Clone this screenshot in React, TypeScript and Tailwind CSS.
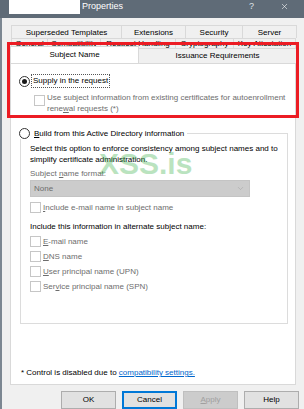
import React from 'react';
import { X, ChevronDown } from 'lucide-react';

const Check: React.FC<{ label: React.ReactNode; dim?: boolean }> = ({ label, dim = true }) => (
  <div className="flex items-center h-[11px] leading-[11px]">
    <span className="w-[11px] h-[11px] border border-[#c6c6c6] bg-white shrink-0" />
    <span className={`ml-[2px] ${dim ? 'text-[#6d6d6d]' : 'text-black'}`}>{label}</span>
  </div>
);

const Radio: React.FC<{ checked?: boolean }> = ({ checked }) => (
  <span className="w-[11px] h-[11px] rounded-full border border-[#333333] bg-white flex items-center justify-center shrink-0">
    {checked && <span className="w-[5px] h-[5px] rounded-full bg-[#1a1a1a]" />}
  </span>
);

const App: React.FC = () => {
  const row1 = [
    { label: 'Superseded Templates', w: 'w-[111px]' },
    { label: 'Extensions', w: 'w-[65px]' },
    { label: 'Security', w: 'w-[58px]' },
    { label: 'Server', w: 'w-[55px]' },
  ];
  const row2 = [
    { label: 'General', w: 'w-[37px]' },
    { label: 'Compatibility', w: 'w-[54px]' },
    { label: 'Request Handling', w: 'w-[76px]' },
    { label: 'Cryptography', w: 'w-[59px]' },
    { label: 'Key Attestation', w: 'w-[63px]' },
  ];

  return (
    <div className="relative w-[304px] h-[409px] overflow-hidden bg-[#f0f0f0] text-[8px] text-black font-['Liberation_Sans',Arial,sans-serif]">
      {/* title bar */}
      <div className="flex items-start h-[18px] bg-[#5f6b77] text-white">
        <div className="ml-[9px] w-[71px] h-[14px] bg-white" />
        <span className="ml-[2px] mt-[1px] text-[9px] leading-[11px]">Properties</span>
        <span className="ml-auto mt-[1px] text-[9px] leading-[11px] text-[#dfe3e7]">?</span>
        <X className="ml-[26px] mr-[15px] mt-[2px] w-[9px] h-[9px] text-white" strokeWidth={1.5} />
      </div>

      <div className="flex h-[391px]">
        <div className="w-[2px] bg-[#7c8792] shrink-0" />
        <div className="flex-1 flex flex-col pl-[8px]">
          {/* tab rows */}
          <div className="flex mt-[7px] ml-[1px] h-[13px]">
            {row1.map((t) => (
              <div key={t.label} className={`${t.w} border border-[#d9d9d9] border-b-0 -ml-px first:ml-0 flex items-center justify-center leading-[13px]`}>
                {t.label}
              </div>
            ))}
          </div>
          <div className="flex ml-[1px] h-[10px]">
            {row2.map((t) => (
              <div key={t.label} className={`${t.w} border border-[#d9d9d9] border-b-0 -ml-px first:ml-0 flex items-center justify-center leading-[10px] overflow-hidden`}>
                {t.label}
              </div>
            ))}
          </div>
          <div className="flex items-end h-[15px]">
            <div className="w-[129px] h-[17px] -mt-[2px] bg-white border border-[#d9d9d9] border-b-0 flex items-center justify-center relative z-10">
              Subject Name
            </div>
            <div className="w-[158px] h-[15px] border border-[#d9d9d9] border-b-0 border-l-0 flex items-center justify-center">
              Issuance Requirements
            </div>
          </div>

          {/* panel */}
          <div className="w-[286px] h-[322px] bg-white border border-[#d9d9d9] flex flex-col pl-[8px] pr-[8px]">
            <div className="flex items-center mt-[10px] h-[14px]">
              <Radio checked />
              <span className="ml-[1px] px-[1px] border border-dotted border-[#555555] leading-[12px]">
                Supply in the request
              </span>
            </div>
            <div className="flex mt-[5px] ml-[15px]">
              <span className="mt-[2px] w-[11px] h-[11px] border border-[#c6c6c6] bg-white shrink-0" />
              <div className="ml-[2px] text-[#6d6d6d] leading-[10.5px]">
                Use subject information from existing certificates for autoenrollment
                <br />
                rene<u>w</u>al requests (*)
              </div>
            </div>

            <div className="flex items-center mt-[14px] h-[11px] w-fit pr-[3px] bg-white relative z-10">
              <Radio />
              <span className="ml-[4px] leading-[11px]">
                <u>B</u>uild from this Active Directory information
              </span>
            </div>
            <div className="-mt-[6px] ml-[1px] w-[268px] h-[191px] border border-[#dcdcdc] flex flex-col pl-[9px] pt-[9px]">
              <div className="leading-[11px]">
                Select this option to enforce consistency among subject names and to
                <br />
                simplify certificate administration.
              </div>
              <div className="mt-[3px] leading-[11px] text-[#6d6d6d]">
                Subject <u>n</u>ame format:
              </div>
              <div className="mt-[1px] w-[220px] h-[17px] bg-[#cccccc] border border-[#c4c4c4] flex items-center pl-[3px] pr-[4px] text-[#6d6d6d]">
                None
                <ChevronDown className="ml-auto w-[9px] h-[9px] text-[#9a9a9a]" strokeWidth={1.2} />
              </div>
              <div className="mt-[5px]">
                <Check label={<><u>I</u>nclude e-mail name in subject name</>} />
              </div>
              <div className="mt-[8px] leading-[11px]">Include this information in alternate subject name:</div>
              <div className="mt-[4px] flex flex-col gap-[4px]">
                <Check label={<><u>E</u>-mail name</>} />
                <Check label={<><u>D</u>NS name</>} />
                <Check label={<><u>U</u>ser principal name (UPN)</>} />
                <Check label={<>Ser<u>v</u>ice principal name (SPN)</>} />
              </div>
            </div>

            <div className="mt-auto mb-[6px] ml-[2px] leading-[11px]">
              * Control is disabled due to{' '}
              <span className="text-[#0066cc] underline">compatibility settings.</span>
            </div>
          </div>

          {/* buttons */}
          <div className="flex justify-end gap-[6px] mt-[6px] pr-[5px]">
            <button className="w-[55px] h-[18px] bg-[#e1e1e1] border border-[#adadad] leading-[16px]">OK</button>
            <button className="w-[55px] h-[18px] bg-[#e1e1e1] border-2 border-[#0078d7] leading-[14px]">Cancel</button>
            <button className="w-[55px] h-[18px] bg-[#cccccc] border border-[#bfbfbf] text-[#a0a0a0] leading-[16px]">
              <u>A</u>pply
            </button>
            <button className="w-[55px] h-[18px] bg-[#e1e1e1] border border-[#adadad] leading-[16px]">Help</button>
          </div>
        </div>
      </div>

      {/* red annotation frame */}
      <div className="absolute left-[7px] top-[42px] w-[292px] h-[76px] border-[3px] border-[#ec1c24] pointer-events-none" />

      {/* watermark */}
      <div className="absolute left-[99px] top-[147px] text-[30px] font-bold leading-[34px] text-[#3cb04a] opacity-35 pointer-events-none">
        XSS.is
      </div>
    </div>
  );
};

export default App;
